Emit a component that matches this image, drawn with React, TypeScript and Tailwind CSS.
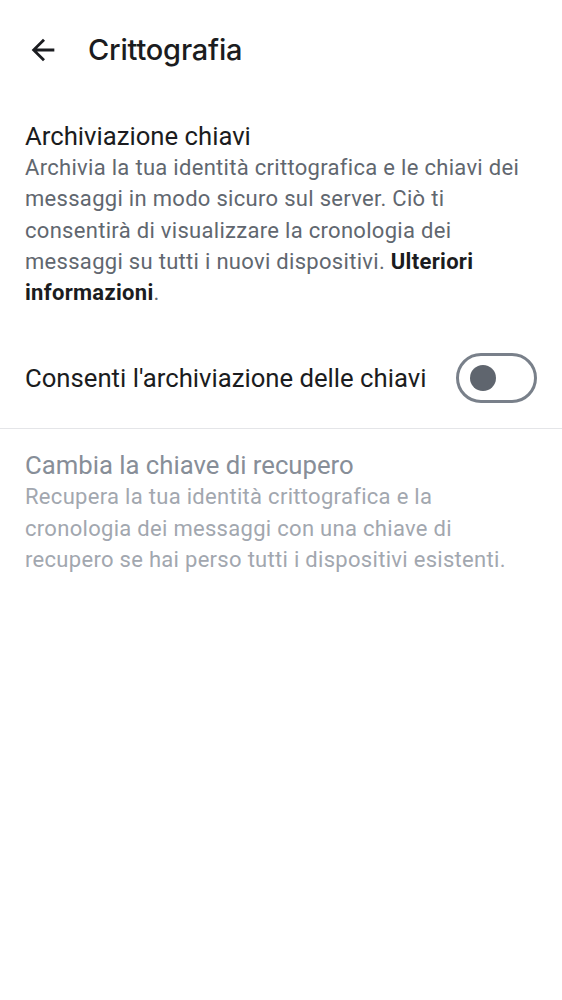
import React from 'react';

const Toggle = () => (
  <div className="w-[81px] h-[50px] rounded-full border-[3px] border-[#79808a] flex items-center pl-[11px] shrink-0">
    <div className="w-[26px] h-[26px] rounded-full bg-[#5f656e]" />
  </div>
);

const App = () => {
  return (
    <div className="min-h-screen bg-white font-['Roboto',sans-serif] w-[562px]">
      {/* Header */}
      <div className="flex items-center h-[100px] pl-[26px]">
        <svg width="34" height="34" viewBox="0 0 24 24" className="shrink-0">
          <path d="M20 11H7.83l5.59-5.59L12 4l-8 8 8 8 1.41-1.41L7.83 13H20v-2z" fill="#1b1c20" />
        </svg>
        <h1 className="ml-[28px] text-[29px] text-[#1b1c20] font-['Inter',sans-serif] font-medium tracking-[-0.2px]">
          Crittografia
        </h1>
      </div>

      {/* Key storage */}
      <div className="px-[25px] pt-[20px]">
        <div className="text-[25.7px] leading-[32px] text-[#1b1c20]">Archiviazione chiavi</div>
        <p className="text-[22px] leading-[31.25px] tracking-[0.3px] text-[#61676f]">
          Archivia la tua identità crittografica e le chiavi dei
          <br />
          messaggi in modo sicuro sul server. Ciò ti
          <br />
          consentirà di visualizzare la cronologia dei
          <br />
          messaggi su tutti i nuovi dispositivi.{' '}
          <span className="font-bold text-[#1b1c20]">
            Ulteriori
            <br />
            informazioni
          </span>
          .
        </p>
      </div>

      <div className="flex items-center justify-between px-[25px] h-[100px] mt-[20px]">
        <span className="text-[25.7px] text-[#1b1c20]">Consenti l'archiviazione delle chiavi</span>
        <Toggle />
      </div>

      <div className="h-px bg-[#e4e5e8]" />

      {/* Recovery */}
      <div className="px-[25px] pt-[20px]">
        <div className="text-[25.7px] leading-[32px] text-[#878e98]">Cambia la chiave di recupero</div>
        <p className="text-[22px] leading-[31.25px] tracking-[0.3px] text-[#a2a7af]">
          Recupera la tua identità crittografica e la
          <br />
          cronologia dei messaggi con una chiave di
          <br />
          recupero se hai perso tutti i dispositivi esistenti.
        </p>
      </div>
    </div>
  );
};

export default App;
